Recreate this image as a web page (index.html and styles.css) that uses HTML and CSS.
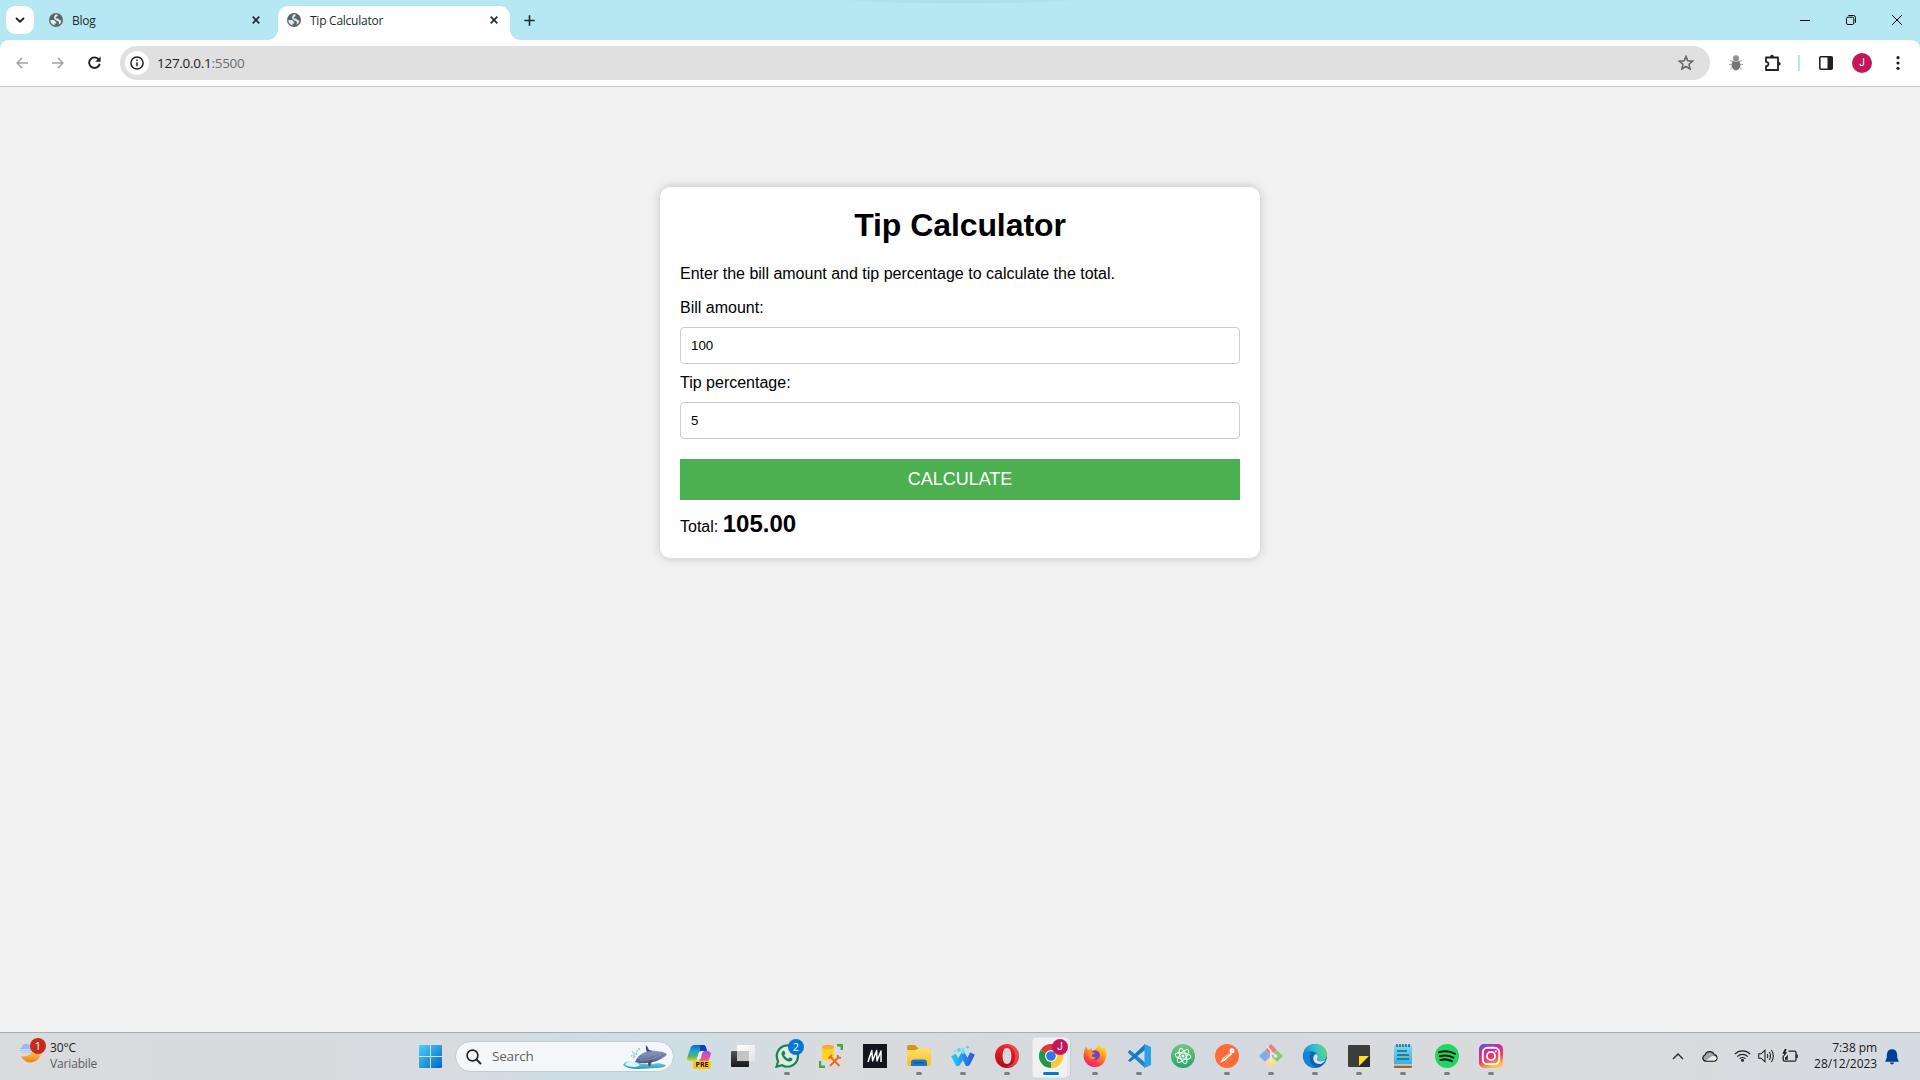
FILE: index.html
```html
<!DOCTYPE html>
<html lang="en">
<head>
<meta charset="utf-8">
<title>Tip Calculator</title>
<link rel="stylesheet" href="styles.css">
</head>
<body>
<svg class="defs" width="0" height="0">
  <defs>
    <symbol id="globe" viewBox="0 0 14 14"><circle cx="7" cy="7" r="7" fill="#5f6368"/><path d="M1.3 7.1H4.8C6.2 7.2 6.1 9 7.3 9.1V10.6H5.6V12.4A5.6 5.6 0 0 1 1.3 7.1ZM6.4 1.6H8.6V2.8C8.6 3.7 7.2 3.5 6.8 4.3V5.6H9.2L10.6 7.2H12.5A5.6 5.6 0 0 1 9.8 11.7L9.9 9.2C9.7 7.7 8 8.1 7 7.2L5.2 5.8V3.6C5.2 2.8 6.4 2.6 6.4 1.6Z" fill="#d9eef4"/></symbol>
    <symbol id="cross" viewBox="0 0 8 8"><path d="M.7.7 7.3 7.3M7.3.7.7 7.3" stroke="#1f2a2e" stroke-width="1.7"/></symbol>
    <linearGradient id="gWin" x1="0" y1="0" x2="1" y2="1"><stop offset="0" stop-color="#4fd0fa"/><stop offset="1" stop-color="#0067c8"/></linearGradient>
    <linearGradient id="gCopA" x1="0" y1="0" x2="0" y2="1"><stop offset="0" stop-color="#0a61d8"/><stop offset=".4" stop-color="#25a5d4"/><stop offset=".7" stop-color="#50b66a"/><stop offset="1" stop-color="#e8d029"/></linearGradient>
    <linearGradient id="gCopB" x1="0" y1="0" x2="0" y2="1"><stop offset="0" stop-color="#a74be8"/><stop offset=".6" stop-color="#ef5c91"/><stop offset="1" stop-color="#f99b58"/></linearGradient>
    <linearGradient id="gFold" x1="0" y1="0" x2="0" y2="1"><stop offset="0" stop-color="#ffdf72"/><stop offset="1" stop-color="#fabb1e"/></linearGradient>
    <linearGradient id="gW" x1="0" y1="0" x2="1" y2="0"><stop offset="0" stop-color="#15cdf8"/><stop offset="1" stop-color="#3158e2"/></linearGradient>
    <linearGradient id="gOpera" x1="0" y1="0" x2="0" y2="1"><stop offset="0" stop-color="#fa2535"/><stop offset="1" stop-color="#a90b18"/></linearGradient>
    <linearGradient id="gFox" x1=".8" y1="0" x2=".3" y2="1"><stop offset="0" stop-color="#ffe32d"/><stop offset=".4" stop-color="#ff9821"/><stop offset=".75" stop-color="#fb4145"/><stop offset="1" stop-color="#ea1d87"/></linearGradient>
    <linearGradient id="gAtom" x1="0" y1="0" x2="0" y2="1"><stop offset="0" stop-color="#74c873"/><stop offset="1" stop-color="#24a576"/></linearGradient>
    <linearGradient id="gEdge" x1="0" y1=".4" x2="1" y2=".2"><stop offset="0" stop-color="#1687d4"/><stop offset=".5" stop-color="#31c0d8"/><stop offset="1" stop-color="#68db5c"/></linearGradient>
    <linearGradient id="gInsta" x1=".1" y1="0" x2=".5" y2="1"><stop offset="0" stop-color="#5a55db"/><stop offset=".35" stop-color="#cc2aa9"/><stop offset=".65" stop-color="#f23b56"/><stop offset="1" stop-color="#fdc34d"/></linearGradient>
    <linearGradient id="gMoon" x1="0" y1="0" x2="0" y2="1"><stop offset="0" stop-color="#ffcf55"/><stop offset="1" stop-color="#ee7d14"/></linearGradient>
    <linearGradient id="gWhale" x1="0" y1="0" x2="0" y2="1"><stop offset="0" stop-color="#8797bd"/><stop offset="1" stop-color="#4e5a88"/></linearGradient>
    <linearGradient id="gSea" x1="0" y1="0" x2="0" y2="1"><stop offset="0" stop-color="#8fdbe6"/><stop offset="1" stop-color="#1d99bf"/></linearGradient>
    <linearGradient id="gNote" x1="0" y1="0" x2="0" y2="1"><stop offset="0" stop-color="#7bd8f1"/><stop offset="1" stop-color="#37a9cf"/></linearGradient>
    <linearGradient id="gWhite" x1="0" y1="0" x2="1" y2="1"><stop offset="0" stop-color="#fff"/><stop offset="1" stop-color="#e4e4e5"/></linearGradient>
    <linearGradient id="gDark" x1="0" y1="0" x2="0" y2="1"><stop offset="0" stop-color="#555"/><stop offset="1" stop-color="#171717"/></linearGradient>
  </defs>
</svg>

<header class="tabstrip">
  <button class="tab-search"><svg width="10" height="6" viewBox="0 0 10 6"><path d="M1 1 5 4.7 9 1" fill="none" stroke="#1f1f1f" stroke-width="1.8"/></svg></button>
  <div class="tab tab-idle"><svg class="favicon"><use href="#globe"/></svg><span>Blog</span><svg class="close"><use href="#cross"/></svg></div>
  <div class="tab tab-active"><svg class="favicon"><use href="#globe"/></svg><span>Tip Calculator</span><svg class="close"><use href="#cross"/></svg></div>
  <svg class="new-tab" width="11" height="11" viewBox="0 0 11 11"><path d="M5.5.3V10.7M.3 5.5H10.7" stroke="#1f2a2e" stroke-width="1.6"/></svg>
  <div class="window-controls">
    <svg viewBox="0 0 10 10"><path d="M0 5.5H10" stroke="#000"/></svg>
    <svg viewBox="0 0 10 10"><rect x=".5" y="2.2" width="7.3" height="7.3" rx="1.4" fill="none" stroke="#000"/><path d="M2.3.5H7.4A2.1 2.1 0 0 1 9.5 2.6V7.7" fill="none" stroke="#000"/></svg>
    <svg viewBox="0 0 10 10"><path d="M.2.2 9.8 9.8M9.8.2.2 9.8" stroke="#000"/></svg>
  </div>
</header>

<nav class="toolbar">
  <div class="nav-buttons">
    <svg width="12" height="12" viewBox="0 0 12 12"><path d="M12 6H1M6.2.8 1 6 6.2 11.2" fill="none" stroke="#a0a3a6" stroke-width="1.5"/></svg>
    <svg width="12" height="12" viewBox="0 0 12 12"><path d="M0 6H11M5.8.8 11 6 5.8 11.2" fill="none" stroke="#a0a3a6" stroke-width="1.5"/></svg>
    <svg width="13" height="13" viewBox="0 0 13 13"><path d="M10.8 3.6A5.3 5.3 0 1 0 11.7 7.7" fill="none" stroke="#202124" stroke-width="1.9"/><path d="M12.6.4V5.8H7.2Z" fill="#202124"/></svg>
  </div>
  <div class="omnibox">
    <span class="site-info"><svg width="14" height="14" viewBox="0 0 14 14"><circle cx="7" cy="7" r="6.1" fill="none" stroke="#202124" stroke-width="1.5"/><path d="M7 6.2V10.3M7 3.6V5.1" stroke="#202124" stroke-width="1.5"/></svg></span>
    <span class="url">127.0.0.1<span class="port">:5500</span></span>
    <svg class="star" width="16" height="16" viewBox="0 0 16 16"><path d="M8 1.4 9.8 5.8 14.6 6.2 11 9.3 12.1 14 8 11.5 3.9 14 5 9.3 1.4 6.2 6.2 5.8Z" fill="none" stroke="#5f6368" stroke-width="1.5"/></svg>
  </div>
  <div class="actions">
    <svg class="bug" width="14" height="16" viewBox="0 0 14 16"><path d="M4 7 .8 5.3M3.5 9.5H0M4 12 1.2 14M10 7 13.2 5.3M10.5 9.5H14M10 12 12.8 14" stroke="#aaa" fill="none"/><circle cx="7" cy="3.2" r="3" fill="#929292"/><ellipse cx="7" cy="10" rx="4.4" ry="5.4" fill="#777"/><path d="M3.5 5.5Q7 7.5 10.5 5.5" stroke="#c4c4c4" fill="none"/></svg>
    <svg class="puzzle" width="18" height="18" viewBox="0 0 18 18"><path d="M2 3.5H14V8.2 16H2V12.2C5.2 12.4 5.2 7.6 2 7.8Z" fill="none" stroke="#202124" stroke-width="1.8" stroke-linejoin="round"/><path d="M6.2 3.5V2.6A1.8 1.8 0 0 1 9.8 2.6V3.5ZM14 8H15A1.7 1.7 0 0 1 15 11.4H14Z" fill="#202124"/></svg>
    <i class="divider"></i>
    <svg class="panel" width="14" height="14" viewBox="0 0 14 14"><rect x=".8" y=".8" width="12.4" height="12.4" rx="1" fill="none" stroke="#202124" stroke-width="1.6"/><path d="M8.5 1H13V13H8.5Z" fill="#202124"/></svg>
    <b class="avatar">J</b>
    <svg class="menu" width="4" height="14" viewBox="0 0 4 14"><circle cx="2" cy="1.7" r="1.6" fill="#202124"/><circle cx="2" cy="7" r="1.6" fill="#202124"/><circle cx="2" cy="12.3" r="1.6" fill="#202124"/></svg>
  </div>
</nav>

<main class="page">
  <section class="container">
    <h1>Tip Calculator</h1>
    <p>Enter the bill amount and tip percentage to calculate the total.</p>
    <label for="bill">Bill amount:</label>
    <input id="bill" type="text" value="100">
    <label for="tip">Tip percentage:</label>
    <input id="tip" type="text" value="5">
    <button class="calculate">CALCULATE</button>
    <div class="result">Total: <span class="total">105.00</span></div>
  </section>
</main>

<footer class="taskbar">
  <div class="weather">
    <div class="weather-icon">
      <svg width="26" height="28" viewBox="0 0 26 28"><path d="M3 17Q10.5 18.5 15 12L23 13.5A10.4 10.4 0 0 1 3 17Z" fill="url(#gMoon)"/><path d="M4 13.8A2.7 2.7 0 0 1 3.6 8.6 4.6 4.6 0 0 1 12.3 7.2L14 13.8Z" fill="#9cb9ee"/><path d="M1.4 10.8H12.5M2.4 12.8H13.4" stroke="#d8e6fb"/></svg>
      <span class="badge badge-red">1</span>
    </div>
    <div class="weather-text"><span>30°C</span><span class="muted">Variabile</span></div>
  </div>

  <div class="dock">
    <svg class="start" width="23" height="23" viewBox="0 0 23 23"><path d="M0 1Q0 0 1 0H11V11H0ZM12 0H22Q23 0 23 1V11H12ZM0 12H11V23H1Q0 23 0 22ZM12 12H23V22Q23 23 22 23H12Z" fill="url(#gWin)"/></svg>
    <div class="search">
      <svg width="16" height="16" viewBox="0 0 16 16"><circle cx="6.5" cy="6.5" r="5.4" fill="none" stroke="#222" stroke-width="1.6"/><path d="M10.4 10.4 15 15" stroke="#222" stroke-width="2"/></svg>
      <span>Search</span>
      <svg class="whale" width="46" height="26" viewBox="0 0 46 26"><path d="M1 21Q3 17 8 17L14 18Q25 22 36 19L44 21Q43 24 34 24L16 25Q5 25 1 21Z" fill="url(#gSea)"/><path d="M3 21Q6 16 12 17L18 21Q13 25 3 21Z" fill="#d9f5fa"/><path d="M13 18C17 9 25 6 34 7L41 8 45 10Q44 13 41 13.5C35 18 25 21 13 18Z" fill="url(#gWhale)"/><path d="M25 8Q23 5 24 1 26 3 27 6L31 7ZM27 16Q25 19 27 23 30 20 30 15Z" fill="#495277"/><path d="M18 16Q29 17 39 11M16 14Q25 14 35 10M20 11Q27 11 33 8" stroke="#8f9bbf" stroke-width=".7" fill="none"/><path d="M12 14Q13 8 10 8M14 11Q15 4 19 5M13 13Q12 11 9 12" stroke="#81cdef" stroke-width="1.5" stroke-dasharray="2 1" fill="none"/></svg>
    </div>

    <div class="app"><svg viewBox="0 0 24 24"><path d="M4 2.8Q5 1 8 1H16Q18.4 1 19 4L19.7 6.5H15.5Q13 6.5 12 9L10.5 14.5Q10 17 7 17H3Q-.5 17 .3 13Z" fill="url(#gCopA)"/><path d="M13 1H16Q18.5 1 19.3 4L20 7H15Q13.6 7 13 8Z" fill="#143fb5"/><path d="M20 7Q24.5 7 23.7 11L21 18Q20 21 17 21H9Q12 19 12.7 16L14.4 10Q15 7 17.5 7Z" fill="url(#gCopB)"/><path d="M14.3 7H17Q15.3 8 14.6 11L13.6 15H9.8L11.5 9.5Q12.2 7 14.3 7Z" fill="#f2f1f4"/></svg><span class="pre">PRE</span></div>
    <div class="app"><svg viewBox="0 0 24 24"><rect x="0" y="7" width="18" height="16" rx="1" fill="url(#gDark)"/><rect x="6" y="1" width="18" height="16" rx="1" fill="url(#gWhite)"/><path d="M6 7H18V17H6Z" fill="#c5c5c6"/></svg></div>
    <div class="app running"><svg viewBox="0 0 24 24"><path d="M1.5 22.7 3.1 17.2A10.6 10.6 0 1 1 7 21.2Z" fill="#e4e9e5" stroke="#15864f" stroke-width="2.2"/><path d="M8.2 6.7Q6 8 6.5 10.5 8.6 16.5 14 17.7 17.7 17.4 17.5 14.6L14.6 13.2 13.2 14.9Q10.2 13.5 9.2 11.3L10.4 9.8 9.4 7Z" fill="#15864f"/></svg><span class="badge badge-blue">2</span></div>
    <div class="app"><svg viewBox="0 0 24 24"><path d="M18 1.2H22.8V6M1 17V22.8H6" fill="none" stroke="#47a34b" stroke-width="2.4"/><path d="M3 3V14Q3 16 9 16T15 14V3Z" fill="#ffd21c"/><ellipse cx="9" cy="3" rx="6" ry="2.3" fill="#f8a83b"/><path d="M11 12.5 20.5 22M19.5 13 11 22" stroke="#ef6c1a" stroke-width="2"/><path d="M9.5 14.5 13 11M18.5 11 19.2 13.5 22 14" stroke="#ef6c1a" stroke-width="1.9" fill="none"/></svg></div>
    <div class="app"><svg viewBox="0 0 24 24"><path d="M0 0H24V24H0Z" fill="#14151d"/><path d="M5 18 8.8 6.5 9.6 17 13.6 6.5 14 17 18 7V18" fill="none" stroke="#fff" stroke-width="1.5" stroke-linejoin="round"/></svg></div>
    <div class="app running"><svg viewBox="0 0 24 24"><path d="M0 3Q0 1 2 1H8L11 4H22Q24 4 24 6V9H0Z" fill="#d9960f"/><path d="M0 6H9L12 4H22Q24 4 24 6V20Q24 22 22 22H2Q0 22 0 20Z" fill="url(#gFold)"/><path d="M4 22V18.5Q4 15.5 7 15.5H17Q20 15.5 20 18.5V22Z" fill="#1378d0"/><path d="M7 18.7H17" stroke="#0b559d" stroke-width="1.4"/></svg></div>
    <div class="app running"><svg viewBox="0 0 24 24"><path d="M2.5 11 6.8 19.5 12 11 16.5 19.5 21.5 9.5" fill="none" stroke="url(#gW)" stroke-width="5.2" stroke-linejoin="round"/><circle cx="8" cy="6" r="1.9" fill="#3cddf3"/><circle cx="12" cy="5" r="1.5" fill="#6de7f8"/><circle cx="16.5" cy="3.2" r="1.4" fill="#3ddaf4"/><circle cx="12" cy="8" r="2" fill="#5ce5fa"/><circle cx="4" cy="7.3" r="1" fill="#60def4"/></svg></div>
    <div class="app running"><svg viewBox="0 0 24 24"><path d="M12 0A12 12 0 1 0 12 24 12 12 0 0 0 12 0ZM12 4C15 4 16.4 7.5 16.4 12S15 20 12 20 7.6 16.5 7.6 12 9 4 12 4Z" fill="url(#gOpera)" fill-rule="evenodd"/><path d="M11 2C18 1 20 8 20 12S18 23 11 22C18 25 24 19 24 12S18-1 11 2Z" fill="#ff5964" opacity=".65"/></svg></div>
    <div class="app active"><svg viewBox="0 0 24 24"><path d="M12 12 1.6 6A12 12 0 0 1 22.4 6Z" fill="#df3c31"/><path d="M12 12 22.4 6A12 12 0 0 1 12 24Z" fill="#fcc934"/><path d="M12 12 12 24A12 12 0 0 1 1.6 6Z" fill="#229749"/><path d="M12 12H23.9A12 12 0 0 1 12 24L17 15Z" fill="#fcc934"/><circle cx="12" cy="12" r="6" fill="#fff"/><circle cx="12" cy="12" r="4.8" fill="#3279e8"/></svg><span class="badge badge-pink">J</span></div>
    <div class="app running"><svg viewBox="0 0 24 24"><path d="M1.2 8Q1 5 3 2.8L5.2 6 8.6 3.7 9.3 6.8Q14 4.5 15.2.4 18 2.2 18.7 4.6L21.3 3Q24.5 8.3 22.8 14A11.2 11.2 0 0 1 1 15Q0 11 1.2 8Z" fill="url(#gFox)"/><path d="M8 8Q12 4.5 16 8 18.7 14 13.2 16 8 17 6.7 12Z" fill="#7540c8"/><path d="M5 8Q9 7 12 9.2L8.8 11Q9 14 13 13.2 10.5 17.5 6.5 14 4.6 11 5 8Z" fill="#ff8d27"/></svg></div>
    <div class="app running"><svg viewBox="0 0 24 24"><path d="M1 7.4 3 6 18 18.2V24L1.2 9Z" fill="#2184c7"/><path d="M1 16.4 18 0V6L3 18Z" fill="#127abf"/><path d="M17.5 0 24 3V21L17.5 24Z" fill="#2ca2e8"/></svg></div>
    <div class="app"><svg viewBox="0 0 24 24"><circle cx="12" cy="12" r="12" fill="url(#gAtom)"/><g fill="none" stroke="#e7fff2" stroke-width="1.1"><ellipse cx="12" cy="12" rx="8" ry="3.1" transform="rotate(10 12 12)"/><ellipse cx="12" cy="12" rx="8" ry="3.1" transform="rotate(70 12 12)"/><ellipse cx="12" cy="12" rx="8" ry="3.1" transform="rotate(130 12 12)"/></g><circle cx="12" cy="12" r="1.5" fill="#e7fff2"/></svg></div>
    <div class="app running"><svg viewBox="0 0 24 24"><circle cx="12" cy="12" r="12" fill="#ff6c37"/><circle cx="17" cy="6.7" r="2.5" fill="#fff"/><path d="M15.8 8.2 17 10.2 10 16.4 5 19 8 14Z" fill="#fff"/><path d="M8.5 15.2 15.5 9" stroke="#ff6c37" stroke-width=".8"/></svg></div>
    <div class="app running"><svg viewBox="0 0 24 24"><path d="M12 0 17.8 5.9 12 11.8 6.2 5.9Z" fill="#f27b76"/><path d="M6 6.2 11.8 12 6 17.8.1 12Z" fill="#82aaf1"/><path d="M18 6.2 23.9 12 18 17.8 12.2 12Z" fill="#80cb78"/><path d="M12 12.2 17.8 18 12 24 6.2 18Z" fill="#ffdc7c"/><path d="M8 2.5 12 7V17M12 8 16 11.5" stroke="#e4e7ed" stroke-width="1.8" fill="none"/><circle cx="12" cy="17" r="1.8" fill="#e4e7ed"/><circle cx="16.5" cy="12" r="1.8" fill="#e4e7ed"/></svg></div>
    <div class="app running"><svg viewBox="0 0 24 24"><circle cx="12" cy="12" r="12" fill="#0f61b4"/><path d="M.2 11C1 4 6 0 12 0 19 0 24 5 24 10.5 24 15 20.5 17 17 17 14 17 13 15.5 14.5 13.5 16 9.5 11 7 7.5 7.5 4 8 1.3 9 .2 11Z" fill="url(#gEdge)"/><path d="M8.5 9C4.5 13 7.5 23 15 23.6 8 25.5.4 20 .2 12.5 1 8 6 7.5 8.5 9Z" fill="#1684d4"/><path d="M14.5 13.4Q12.5 16.8 17 17.3 20.5 17.5 23 15.6 21.3 19 18 20 11 20.5 10.3 15 10 11 13 10Q15.7 11.2 14.5 13.4Z" fill="#dce2e9"/></svg></div>
    <div class="app running"><svg viewBox="0 0 24 24"><path d="M2 1H22Q23 1 23 2V13L13 23H2Q1 23 1 22V2Q1 1 2 1Z" fill="#3d3d3d"/><path d="M12 12H23V23H12Z" fill="#292929"/><path d="M12 12H22L12 22Z" fill="#ffdf18"/></svg></div>
    <div class="app running"><svg viewBox="0 0 24 24"><rect x="3" y="1" width="18" height="22" rx="1.5" fill="url(#gNote)"/><path d="M3 21.5H21V23Q21 24 20 24H4Q3 24 3 23Z" fill="#b65c1b"/><path d="M3 21H21" stroke="#eaf7fb"/><path d="M6 0V3M9 0V3M12 0V3M15 0V3M18 0V3" stroke="#155f7a" stroke-width="1.4"/><path d="M6 7H16M6 11H18M6 15H18" stroke="#16688b" stroke-width="1.4"/></svg></div>
    <div class="app running"><svg viewBox="0 0 24 24"><circle cx="12" cy="12" r="12" fill="#1ed760"/><path d="M4 8.3Q12.5 5.6 20 9.8M4.8 12.3Q12 10.2 18.3 13.7M5.5 16Q11.5 14.2 16.8 17.2" fill="none" stroke="#101512" stroke-width="2.1" stroke-linecap="round"/></svg></div>
    <div class="app running"><svg viewBox="0 0 24 24"><rect width="24" height="24" rx="5" fill="url(#gInsta)"/><rect x="3.8" y="3.8" width="16.4" height="16.4" rx="4.6" fill="none" stroke="#fff" stroke-width="1.9"/><circle cx="12" cy="12" r="4.1" fill="none" stroke="#fff" stroke-width="1.9"/><circle cx="16.8" cy="7.3" r="1.1" fill="#fff"/></svg></div>
  </div>

  <div class="tray">
    <svg class="chevron" width="12" height="7" viewBox="0 0 12 7"><path d="M1 6 6 1 11 6" fill="none" stroke="#222" stroke-width="1.3"/></svg>
    <svg class="cloud" width="16" height="12" viewBox="0 0 16 12"><path d="M3.7 11.2A3.2 3.2 0 0 1 3 5 5 5 0 0 1 12.3 4.6 3.4 3.4 0 0 1 12.5 11.2Z" fill="#a5a5a5" stroke="#222" stroke-width="1.2"/><path d="M4 10.5 10 6.2Q14.6 5.6 14.5 8.6 14 10.5 12.5 10.5Z" fill="#eee"/></svg>
    <svg class="wifi" width="17" height="13" viewBox="0 0 17 13"><path d="M.8 5.1A10.8 10.8 0 0 1 16.2 5.1M3.2 7.6A7.4 7.4 0 0 1 13.8 7.6M5.6 9.7A4.2 4.2 0 0 1 11.4 9.7" fill="none" stroke="#222" stroke-width="1.1"/><circle cx="8.5" cy="11.3" r="1.5" fill="#222"/></svg>
    <svg class="speaker" width="17" height="14" viewBox="0 0 17 14"><path d="M.7 4.8H3L7 1.2V12.8L3 9.2H.7Z" fill="none" stroke="#222" stroke-width="1.1"/><path d="M9.2 4.9Q10.4 7 9.2 9.1M11.3 3Q13.7 7 11.3 11M13.4 1Q17.2 7 13.4 13" fill="none" stroke="#222" stroke-width="1.1"/></svg>
    <svg class="battery" width="16" height="14" viewBox="0 0 16 14"><path d="M6.5 2.2H12.5Q14 2.2 14 3.7V10.7Q14 12.2 12.5 12.2H3.2Q1.2 12.2 1.2 10.5V6.5" fill="none" stroke="#222" stroke-width="1.3"/><path d="M14.2 5.6H15.8V9H14.2ZM3 10.8V8H4L5.8 5.5V10.8ZM2.8 0 .3 4.7H2.2L1.4 8 5.3 3.2H3.4L4.6 0Z" fill="#222"/></svg>
    <div class="clock"><span>7:38 pm</span><span>28/12/2023</span></div>
    <svg class="bell" width="14" height="16" viewBox="0 0 14 16"><path d="M7 .3Q12 .3 12.2 6V8.7L13.7 12Q13.8 12.8 13 12.8H1Q.2 12.8.3 12L1.8 8.7V6Q2 .3 7 .3ZM4.8 13.6H9.2Q8.6 15.5 7 15.5T4.8 13.6Z" fill="#003e92"/></svg>
  </div>
</footer>
</body>
</html>
```
FILE: styles.css
```css
* { box-sizing: border-box; }

body {
  margin: 0;
  height: 1080px;
  display: flex;
  flex-direction: column;
  overflow: hidden;
  background: #f1f1f1;
  font-family: "Liberation Sans", Arial, sans-serif;
}

svg { display: block; flex: none; }
.defs { position: absolute; }

/* Tab strip */
.tabstrip {
  flex: none;
  height: 40px;
  display: flex;
  align-items: flex-start;
  padding: 6px 18px 0 6px;
  background: radial-gradient(120px 4px at 960px 0, #addee9 60%, transparent) no-repeat, #b5e8f3;
  font: 12px "Open Sans", "Noto Sans", sans-serif;
  color: #202b2f;
}
.tab-search {
  width: 28px;
  height: 28px;
  padding: 0;
  border: 0;
  border-radius: 9px;
  background: #fff;
  display: flex;
  align-items: center;
  justify-content: center;
}
.tab { display: flex; align-items: center; height: 34px; padding-bottom: 6px; }
.tab span { margin-left: 9px; letter-spacing: -0.25px; }
.tab .close { margin-left: auto; width: 8px; height: 8px; }
.favicon { width: 14px; height: 14px; }
.tab-idle { width: 244px; padding-left: 15px; padding-right: 18px; }
.tab-active {
  position: relative;
  width: 232px;
  padding-left: 9px;
  padding-right: 12px;
  background: #fff;
  border-radius: 10px 10px 0 0;
}
.tab-active::before,
.tab-active::after {
  content: "";
  position: absolute;
  bottom: 0;
  width: 10px;
  height: 10px;
}
.tab-active::before { left: -10px; background: radial-gradient(circle at 0 0, transparent 9.5px, #fff 10px); }
.tab-active::after { right: -10px; background: radial-gradient(circle at 100% 0, transparent 9.5px, #fff 10px); }
.new-tab { margin: 9px 0 0 14px; }
.window-controls { display: flex; gap: 36px; margin: 9px 0 0 auto; }
.window-controls svg { width: 10px; height: 10px; }

/* Toolbar */
.toolbar {
  flex: none;
  height: 47px;
  display: flex;
  align-items: center;
  padding: 0 20px 1px 16px;
  border-bottom: 1px solid #c9c9c9;
  background:
    radial-gradient(circle at 8px 8px, #fff 7.5px, #b5e8f3 8px) 0 0 / 8px 8px no-repeat,
    radial-gradient(circle at 0 8px, #fff 7.5px, #b5e8f3 8px) 100% 0 / 8px 8px no-repeat,
    #fff;
}
.nav-buttons { width: 104px; display: flex; align-items: center; gap: 24px; }
.omnibox {
  width: 1590px;
  height: 34px;
  display: flex;
  align-items: center;
  padding: 0 16px 0 5px;
  border-radius: 17px;
  background: #e0e0e0;
}
.site-info {
  width: 24px;
  height: 24px;
  border-radius: 50%;
  background: #fff;
  display: flex;
  align-items: center;
  justify-content: center;
}
.url { margin-left: 8px; font: 13.5px "Open Sans", "Noto Sans", sans-serif; letter-spacing: -0.28px; color: #202124; }
.port { color: #6b6e71; }
.star { margin-left: auto; }
.actions { display: flex; align-items: center; margin-left: 19px; }
.puzzle { margin-left: 21px; }
.divider { width: 2px; height: 16px; margin-left: 16px; background: #b5e8f3; }
.panel { margin-left: 19px; }
.avatar {
  width: 20px;
  height: 20px;
  margin-left: 19px;
  border-radius: 50%;
  background: #c2185b;
  color: #fff;
  font: 10px/20px Roboto, sans-serif;
  text-align: center;
}
.menu { margin-left: 24px; }

/* Calculator page */
.page { flex: 1; padding-top: 100px; }
.container {
  width: 600px;
  height: 371px;
  margin: 0 auto;
  padding: 20px;
  border-radius: 10px;
  background: #fff;
  box-shadow: 0 0 10px rgba(0, 0, 0, 0.2);
  color: #000;
  font-size: 16px;
  line-height: 18px;
}
h1 { margin: 0 0 22px; font-size: 32px; line-height: 36px; letter-spacing: -0.08px; text-align: center; }
p { margin: 0 0 16px; }
label { display: block; margin: 0 0 10px; }
input {
  display: block;
  width: 100%;
  height: 37px;
  margin: 0 0 10px;
  padding: 10px;
  border: 1px solid #ccc;
  border-radius: 4px;
  background: #fff;
  color: #000;
  font: 13.333px "Liberation Sans", Arial, sans-serif;
}
.calculate {
  display: block;
  width: 100%;
  height: 41px;
  margin: 20px 0 10px;
  padding: 0;
  border: 0;
  background: #4caf50;
  color: #fff;
  font: 18px "Liberation Sans", Arial, sans-serif;
}
.result { line-height: 27px; }
.total { font-size: 24px; font-weight: bold; }

/* Taskbar */
.taskbar {
  flex: none;
  height: 48px;
  display: flex;
  border-top: 1px solid #a9adb1;
  background: linear-gradient(90deg, #dadbdc 0, #d8dade 300px, #d8dce0 450px, #cedde5 560px, #cfdde5 690px, #d9dbdd 820px, #d7dadd 1000px, #d3d9e0 1180px, #d8dadd 1380px, #dadbdc 1600px, #d5dbe3 1920px);
  font: 12px "Open Sans", "Noto Sans", sans-serif;
  color: #1b1b1b;
}
.weather { width: 419px; display: flex; padding-left: 18px; }
.weather-icon { position: relative; width: 32px; padding-top: 6px; }
.weather-text { display: flex; flex-direction: column; padding-top: 7px; line-height: 16px; letter-spacing: -0.15px; }
.muted { color: #5a5b5d; }
.badge {
  position: absolute;
  width: 16px;
  height: 16px;
  border-radius: 50%;
  color: #fff;
  font: 11px/16px "Open Sans", "Noto Sans", sans-serif;
  text-align: center;
}
.badge-red { left: 12px; top: 5px; background: #c42b1c; }
.badge-blue { left: 23px; top: 6px; background: #0078d4; }
.badge-pink { left: 23px; top: 6px; background: #c2185b; font: 10px/16px Roboto, sans-serif; }
.dock { display: flex; }
.start { margin-top: 12px; }
.search {
  width: 219px;
  height: 31px;
  margin: 8px 3px 0 13px;
  padding: 0 5px 0 10px;
  display: flex;
  align-items: center;
  border: 1px solid #c2cbd0;
  border-radius: 16px;
  background: #f4f7f9;
  color: #5c5f61;
  font-size: 13.5px;
}
.search span { margin: -2px 0 0 10px; letter-spacing: -0.2px; }
.whale { margin-left: auto; }
.app { position: relative; width: 44px; padding: 11px 10px 0; }
.app svg { position: relative; width: 24px; height: 24px; }
.running::after,
.active::after {
  content: "";
  display: block;
  width: 6px;
  height: 3px;
  margin: 4px auto 0;
  border-radius: 2px;
  background: #7c7e80;
}
.active::after { position: relative; width: 16px; background: #0078d4; }
.active::before {
  content: "";
  position: absolute;
  left: 3px;
  top: 4px;
  width: 34px;
  height: 39px;
  border: 1px solid #e4e5e7;
  border-radius: 4px;
  background: #f0f1f2;
  box-shadow: 3px 0 0 -1px #e8e9eb, 4px 0 0 -1px #c9cccf;
}
.pre {
  position: absolute;
  left: 16px;
  top: 28px;
  width: 18px;
  height: 8px;
  border-radius: 2px;
  background: #ffc800;
  color: #1b1600;
  font: bold 7px/8px "Open Sans", sans-serif;
  text-align: center;
}
.tray { display: flex; align-items: center; margin-left: auto; padding-right: 21px; }
.cloud { margin-left: 18px; margin-top: -2px; }
.wifi { margin-left: 16px; margin-top: -2px; }
.speaker { margin-left: 7px; margin-top: -1px; }
.battery { margin-left: 7px; margin-top: -2px; }
.clock { width: 79px; display: flex; flex-direction: column; text-align: right; line-height: 16px; letter-spacing: -0.08px; margin-top: -2px; }
.bell { margin-left: 8px; }
```
